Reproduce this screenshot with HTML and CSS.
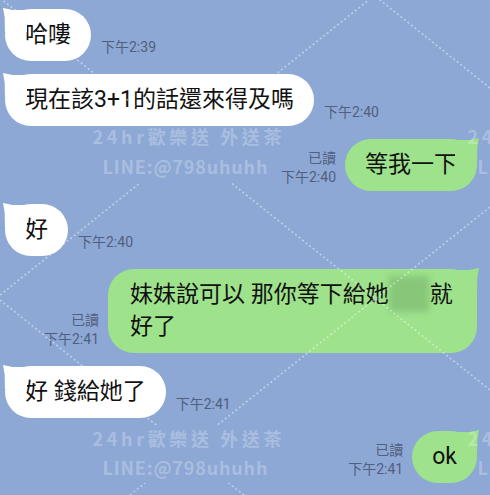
FILE: index.html
```html
<!DOCTYPE html>
<html lang="zh-Hant">
<head>
    <meta charset="UTF-8">
    <title>Chat</title>
    <link rel="stylesheet" href="styles.css">
</head>
<body>

    <div class="screen">
        <div class="chat">
            <div class="row in">
                <div class="bubble">哈嘍</div>
                <div class="meta"><span>下午2:39</span></div>
            </div>
            <div class="row in">
                <div class="bubble">現在該3+1的話還來得及嗎</div>
                <div class="meta"><span>下午2:40</span></div>
            </div>
            <div class="row out">
                <div class="meta"><span>已讀</span><span>下午2:40</span></div>
                <div class="bubble">等我一下</div>
            </div>
            <div class="row in">
                <div class="bubble">好</div>
                <div class="meta"><span>下午2:40</span></div>
            </div>
            <div class="row out">
                <div class="meta"><span>已讀</span><span>下午2:41</span></div>
                <div class="bubble wide">妹妹說可以 那你等下給她<span class="hidden-word"></span>就好了</div>
            </div>
            <div class="row in">
                <div class="bubble">好 錢給她了</div>
                <div class="meta"><span>下午2:41</span></div>
            </div>
            <div class="row out">
                <div class="meta"><span>已讀</span><span>下午2:41</span></div>
                <div class="bubble">ok</div>
            </div>
        </div>

        <!-- watermark that sits over the whole screenshot -->
        <svg class="watermark" width="490" height="495" viewBox="0 0 490 495">
            <defs>
                <mask id="textGap">
                    <rect x="0" y="0" width="490" height="495" fill="#fff"/>
                    <rect x="86" y="124" width="204" height="59" fill="#000"/>
                    <rect x="86" y="426" width="204" height="57" fill="#000"/>
                    <rect x="461" y="124" width="204" height="59" fill="#000"/>
                    <rect x="461" y="426" width="204" height="57" fill="#000"/>
                </mask>
            </defs>
            <g class="wm-lines" mask="url(#textGap)">
                <line x1="0" y1="295" x2="490" y2="-97"/>
                <line x1="0" y1="599" x2="490" y2="207"/>
                <line x1="0" y1="-304" x2="490" y2="88"/>
                <line x1="0" y1="-2" x2="490" y2="390"/>
                <line x1="0" y1="300" x2="490" y2="692"/>
            </g>
            <g class="wm-text">
                <text x="187" y="144" textLength="189">24hr歡樂送 外送茶</text>
                <text x="185" y="174" textLength="165">LINE:@798uhuhh</text>
                <text x="187" y="446" textLength="189">24hr歡樂送 外送茶</text>
                <text x="185" y="475" textLength="165">LINE:@798uhuhh</text>
                <text x="562" y="144" textLength="189">24hr歡樂送 外送茶</text>
                <text x="560" y="174" textLength="165">LINE:@798uhuhh</text>
                <text x="562" y="446" textLength="189">24hr歡樂送 外送茶</text>
                <text x="560" y="475" textLength="165">LINE:@798uhuhh</text>
            </g>
        </svg>
    </div>

</body>
</html>
```

FILE: styles.css
```css
/* Reset default margins and paddings */
* {
    margin: 0;
    padding: 0;
    box-sizing: border-box;
}

body {
    background-color: #8da8d5;
    font-family: Roboto, 'Noto Sans CJK TC', sans-serif;
}

.screen {
    position: relative;
    width: 490px;
    height: 495px;
    overflow: hidden;
    background-color: #8da8d5;
}

.chat {
    display: flex;
    flex-direction: column;
    gap: 13px;
    padding: 9px 13px 0 5px;
}

.row {
    display: flex;
    align-items: flex-end;
    gap: 10px;
}

.row.out {
    justify-content: flex-end;
    gap: 9px;
}

.bubble {
    position: relative;
    background-color: #ffffff;
    color: #111111;
    font-size: 23px;
    line-height: 32px;
    padding: 10px 20px;
    border-radius: 26px;
    white-space: nowrap;
}

/* little pointed tail at the top corner */
.bubble::before {
    content: '';
    position: absolute;
    top: -1px;
    left: -2px;
    width: 24px;
    height: 24px;
    background-color: inherit;
    clip-path: polygon(0 0, 40% 8%, 100% 8%, 100% 100%, 8% 100%, 7% 40%);
}

.row.out .bubble {
    background-color: #9ee28c;
}

.row.out .bubble::before {
    left: auto;
    right: -2px;
    clip-path: polygon(100% 0, 60% 8%, 0 8%, 0 100%, 92% 100%, 93% 40%);
}

.bubble.wide {
    white-space: normal;
    max-width: 369px;
    padding-left: 22px;
}

.hidden-word {
    display: inline-block;
    width: 40px;
    height: 36px;
    margin: -10px 1px -6px 0;
    vertical-align: middle;
    background-color: rgba(95, 150, 90, 0.35);
    filter: blur(3px);
}

.meta {
    display: flex;
    flex-direction: column;
    align-items: flex-end;
    font-size: 14px;
    line-height: 19px;
    color: #51607f;
    padding-bottom: 4px;
    white-space: nowrap;
}

.watermark {
    position: absolute;
    top: 0;
    left: 0;
    pointer-events: none;
}

.wm-lines line {
    stroke: #ffffff;
    stroke-opacity: 0.45;
    stroke-width: 1.6;
    stroke-dasharray: 2 2.5;
}

.wm-text text {
    fill: #ffffff;
    fill-opacity: 0.27;
    font-family: 'Noto Sans CJK TC', sans-serif;
    font-weight: bold;
    font-size: 18px;
    text-anchor: middle;
}
```
